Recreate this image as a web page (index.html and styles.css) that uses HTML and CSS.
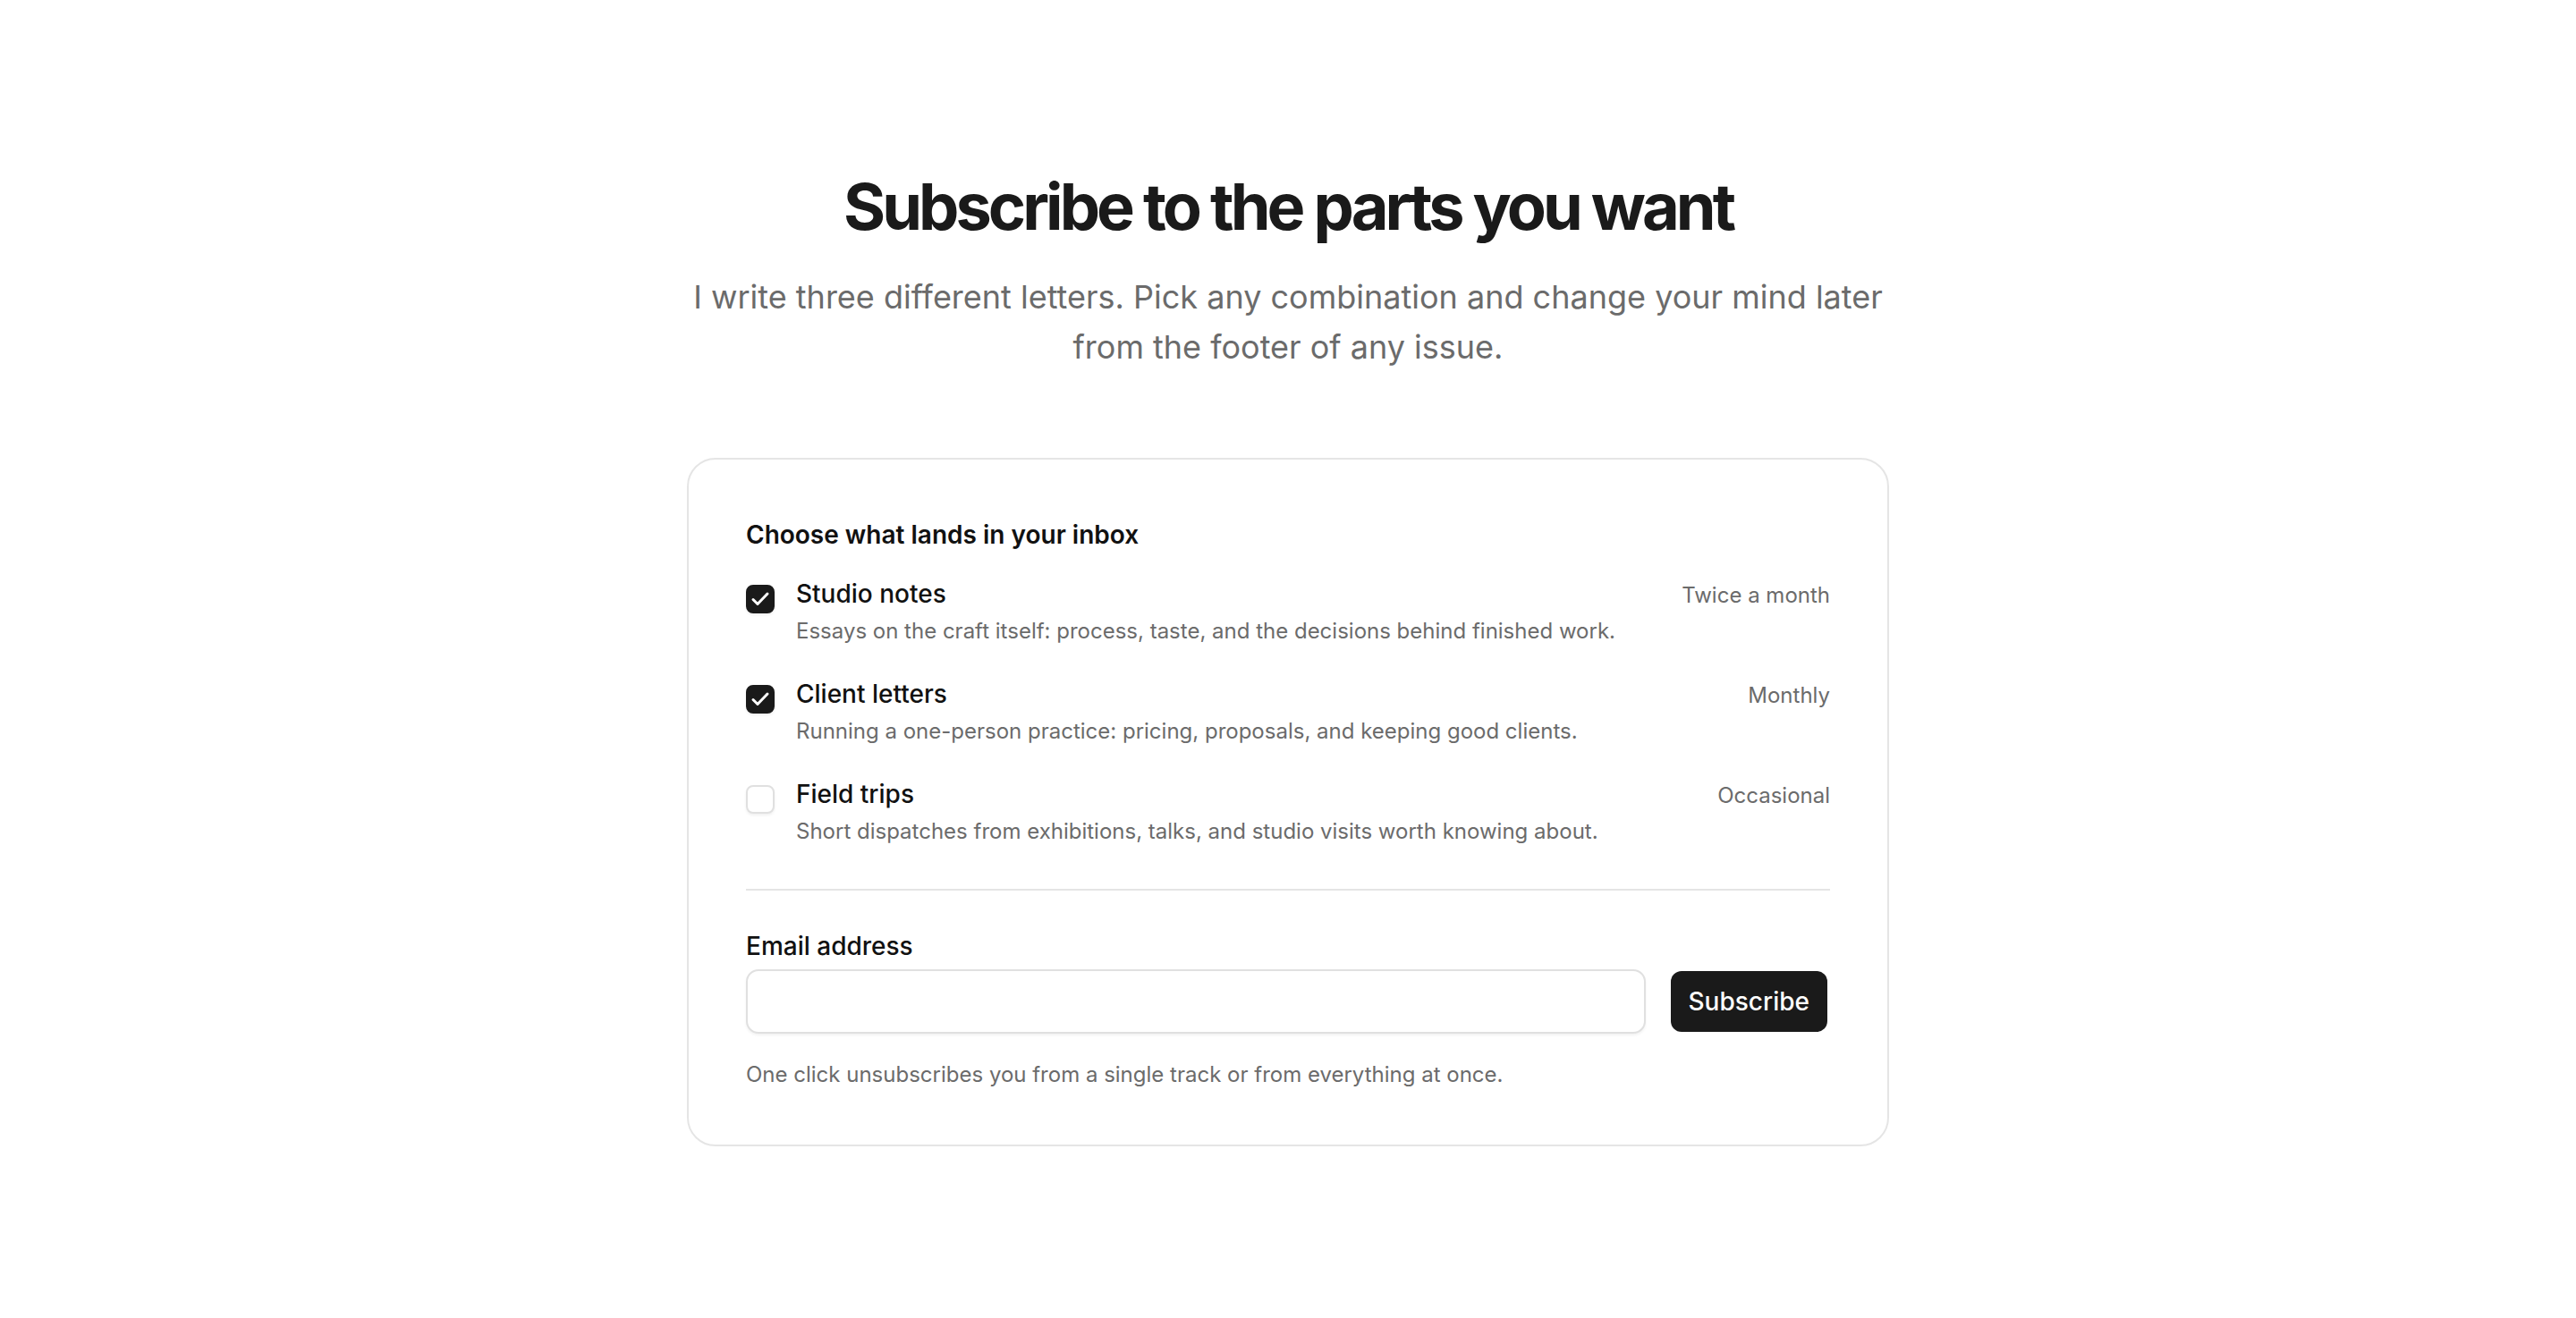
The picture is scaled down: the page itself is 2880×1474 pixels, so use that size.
FILE: index.html
```html
<!DOCTYPE html>
<html lang="en">
<head>
    <meta charset="UTF-8">
    <meta name="viewport" content="width=device-width, initial-scale=1.0">
    <title>Subscribe</title>
    <link rel="stylesheet" href="styles.css">
</head>
<body>
    <main class="page">
        <header class="intro">
            <h1 class="title">Subscribe to the parts you want</h1>
            <p class="lead">I write three different letters. Pick any combination and change your mind later from the footer of any issue.</p>
        </header>

        <form class="card">
            <h2 class="card-heading">Choose what lands in your inbox</h2>

            <div class="tracks">
                <label class="track">
                    <span class="check is-on">
                        <svg viewBox="0 0 32 32"><path d="M8 16.5l5 5 11-11.5"/></svg>
                    </span>
                    <span class="track-body">
                        <span class="track-top">
                            <span class="track-name">Studio notes</span>
                            <span class="track-freq">Twice a month</span>
                        </span>
                        <span class="track-desc">Essays on the craft itself: process, taste, and the decisions behind finished work.</span>
                    </span>
                </label>
                <label class="track">
                    <span class="check is-on">
                        <svg viewBox="0 0 32 32"><path d="M8 16.5l5 5 11-11.5"/></svg>
                    </span>
                    <span class="track-body">
                        <span class="track-top">
                            <span class="track-name">Client letters</span>
                            <span class="track-freq">Monthly</span>
                        </span>
                        <span class="track-desc">Running a one-person practice: pricing, proposals, and keeping good clients.</span>
                    </span>
                </label>
                <label class="track">
                    <span class="check"></span>
                    <span class="track-body">
                        <span class="track-top">
                            <span class="track-name">Field trips</span>
                            <span class="track-freq">Occasional</span>
                        </span>
                        <span class="track-desc">Short dispatches from exhibitions, talks, and studio visits worth knowing about.</span>
                    </span>
                </label>
            </div>

            <div class="signup">
                <label class="field-label" for="email">Email address</label>
                <div class="field-row">
                    <input class="field" id="email" type="email">
                    <button class="btn" type="button">Subscribe</button>
                </div>
                <p class="note">One click unsubscribes you from a single track or from everything at once.</p>
            </div>
        </form>
    </main>
</body>
</html>
```

FILE: styles.css
```css
* {
    margin: 0;
    padding: 0;
    box-sizing: border-box;
}
body {
    background: #fff;
    color: #111;
    font-family: Inter, "Noto Sans", sans-serif;
}
.page {
    display: flex;
    flex-direction: column;
    align-items: center;
    padding: 191px 0 160px;
}
.intro {
    width: 1344px;
    text-align: center;
}
.title {
    font-size: 72px;
    line-height: 80px;
    font-weight: 700;
    letter-spacing: -0.055em;
    color: #1a1a1a;
}
.lead {
    margin-top: 33px;
    font-size: 36px;
    line-height: 56px;
    color: #6b6b6b;
}

.card {
    width: 1344px;
    margin-top: 96px;
    padding: 64px 64px 58px;
    border: 2px solid #e5e5e5;
    border-radius: 32px;
    background: #fff;
}
.card-heading {
    font-size: 28px;
    line-height: 40px;
    font-weight: 600;
    color: #111;
}
.tracks {
    display: flex;
    flex-direction: column;
    gap: 30px;
    margin-top: 26px;
    padding-bottom: 44px;
    border-bottom: 2px solid #e5e5e5;
}
.track {
    display: flex;
    gap: 24px;
    cursor: pointer;
}
.check {
    flex: none;
    width: 32px;
    height: 32px;
    margin-top: 10px;
    border: 2px solid #e0e0e0;
    border-radius: 8px;
    background: #fff;
    box-shadow: 0 2px 3px rgba(0, 0, 0, 0.06);
    display: flex;
    align-items: center;
    justify-content: center;
}
.check.is-on {
    border-color: #1a1a1a;
    background: #1a1a1a;
}
.check svg {
    width: 32px;
    height: 32px;
    flex: none;
    fill: none;
    stroke: #fff;
    stroke-width: 3;
    stroke-linecap: round;
    stroke-linejoin: round;
}
.track-body {
    flex: 1;
    display: flex;
    flex-direction: column;
}
.track-top {
    display: flex;
    justify-content: space-between;
    align-items: baseline;
}
.track-name {
    font-size: 28px;
    line-height: 40px;
    font-weight: 500;
    color: #111;
}
.track-freq {
    font-size: 24px;
    color: #6b6b6b;
}
.track-desc {
    margin-top: 2px;
    font-size: 24px;
    line-height: 40px;
    color: #6b6b6b;
}

.signup {
    padding-top: 42px;
}
.field-label {
    display: block;
    font-size: 28px;
    line-height: 40px;
    font-weight: 500;
    color: #111;
}
.field-row {
    display: flex;
    align-items: center;
    gap: 28px;
    margin-top: 6px;
}
.field {
    flex: 1;
    height: 72px;
    padding: 0 24px;
    border: 2px solid #e0e0e0;
    border-radius: 14px;
    box-shadow: 0 2px 3px rgba(0, 0, 0, 0.05);
    font: inherit;
    font-size: 28px;
    outline: none;
}
.btn {
    height: 68px;
    margin-right: 3px;
    padding: 0 20px;
    border: none;
    border-radius: 12px;
    background: #1a1a1a;
    color: #fff;
    font-family: inherit;
    font-size: 28px;
    font-weight: 500;
}
.note {
    margin-top: 26px;
    font-size: 24px;
    line-height: 40px;
    color: #6b6b6b;
}
```
